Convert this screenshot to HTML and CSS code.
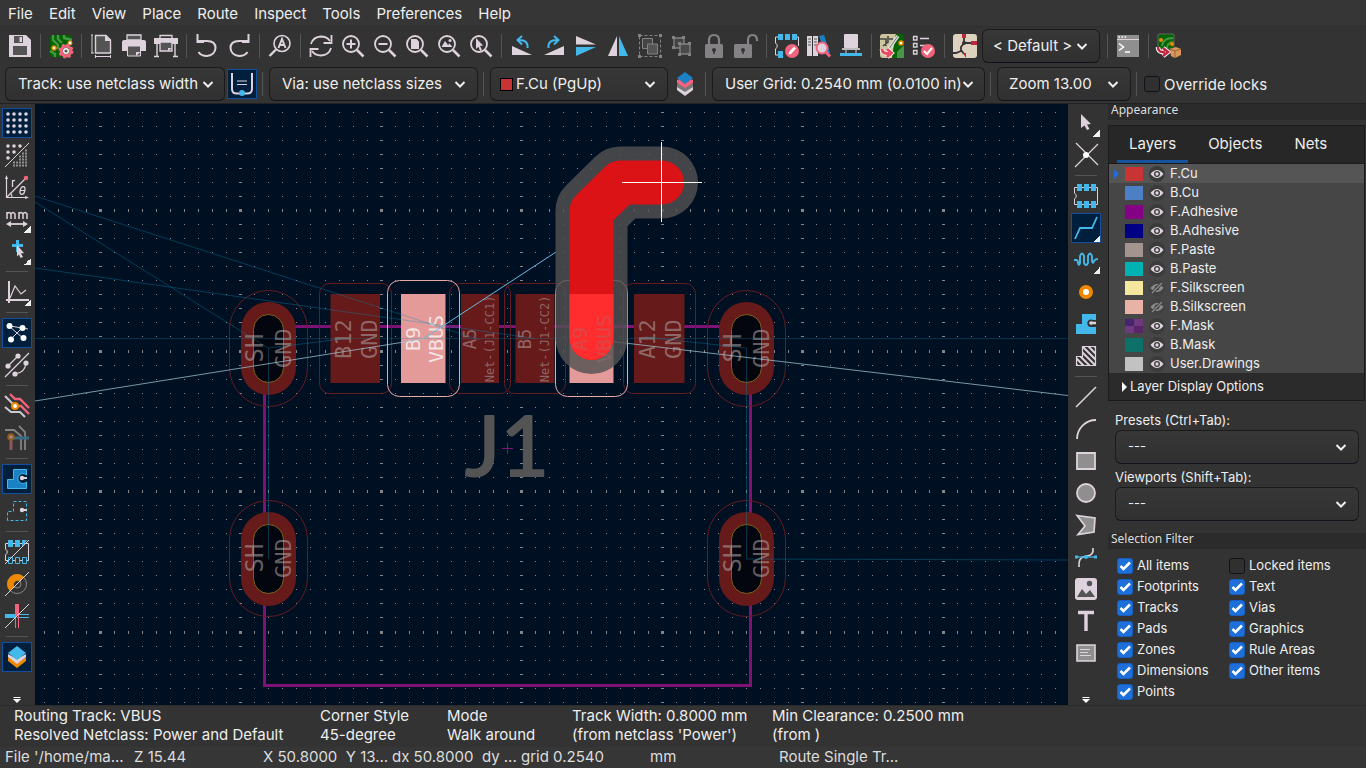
FILE: index.html
```html
<!DOCTYPE html>
<html lang="en">
<head>
<meta charset="utf-8">
<title>PCB Editor</title>
<link rel="stylesheet" href="styles.css">
</head>
<body>
<svg class="defs" aria-hidden="true">
  <symbol id="eye" viewBox="0 0 16 16"><circle cx="8" cy="8" r="8" fill="#3b3b3b"/><path d="M1.500 8Q8 0 14.500 8Q8 16 1.500 8Z" fill="#ded3dd"/><circle cx="8" cy="8" r="3" fill="#3b3b3b"/><circle cx="8" cy="8" r="1.700" fill="#ded3dd"/></symbol>
  <symbol id="eye-off" viewBox="0 0 16 16"><circle cx="8" cy="8" r="8" fill="#424242"/><path d="M1.500 8Q8 0 14.500 8Q8 16 1.500 8Z" fill="#8d8a8d"/><circle cx="8" cy="8" r="2.400" fill="#424242"/><path d="M3 13L13 3" stroke="#424242" stroke-width="3"/><path d="M3 13L13 3" stroke="#8d8a8d" stroke-width="1.300"/></symbol>
  <symbol id="chevron" viewBox="0 0 12 12"><path d="M1.500 4L6 8.500L10.500 4" fill="none" stroke="#eee" stroke-width="2"/></symbol>
  <symbol id="lens" viewBox="0 0 24 24"><circle cx="10" cy="10" r="8" fill="none" stroke="#ded3dd" stroke-width="1.800"/><path d="M16 16L22.500 22.500" stroke="#ded3dd" stroke-width="2.500"/></symbol>
  <symbol id="more" viewBox="0 0 24 24"><path d="M8.500 8.500H15.500M8.500 10.500H15.500" stroke="#fff"/><path d="M8.500 10.500H15.500L12 14Z" fill="#fff"/></symbol>
</svg>

<nav class="menubar">
  <button>File</button><button>Edit</button><button>View</button><button>Place</button><button>Route</button><button>Inspect</button><button>Tools</button><button>Preferences</button><button>Help</button>
</nav>

<div class="toolbar" role="toolbar" aria-label="Main">
  <button class="tool" aria-label="Save"><svg viewBox="0 0 24 24"><path d="M1 1H18L23 6V23H1Z" fill="#ded3dd"/><path d="M6 2H15V9H6Z M5 12H19V21H5Z" fill="#545454"/><path d="M11.500 3H14V8H11.500Z" fill="#ded3dd"/></svg></button>
  <span class="sep"></span>
  <button class="tool" aria-label="Board setup"><svg viewBox="0 0 24 24"><rect x="1" y="1" width="22" height="22" rx="3" fill="#006400"/><path d="M4 1V6L9 11V15M9 1V5L13 9M15 1V4L23 6M1 17L6 20V23" fill="none" stroke="#489648" stroke-width="2.400"/><circle cx="5" cy="14" r="2" fill="#fff" stroke="#ee8800" stroke-width="1.500"/><circle cx="21" cy="9" r="2" fill="#fff" stroke="#ee8800"/><circle cx="17" cy="17" r="4.800" fill="none" stroke="#f2647e" stroke-width="3.200"/><circle cx="17" cy="17" r="6.500" fill="none" stroke="#f2647e" stroke-width="2" stroke-dasharray="2.600 2.500"/><circle cx="17" cy="17" r="3" fill="#fff"/><circle cx="17" cy="17" r="1.600" fill="#555"/></svg></button>
  <span class="sep"></span>
  <button class="tool" aria-label="Page settings"><svg viewBox="0 0 24 24"><path d="M5.500 1.500H16L20.500 6V19H5.500Z" fill="#545454" stroke="#ded3dd" stroke-width="1.400"/><path d="M15 1L21 7H15Z" fill="#ded3dd"/><path d="M2 1V19M1 1H3M1 19H4M5 22.500H21M5.500 21V24M20.500 21V24" stroke="#ded3dd"/></svg></button>
  <button class="tool" aria-label="Print"><svg viewBox="0 0 24 24"><path d="M5 1H19V6H5Z" fill="#545454" stroke="#ded3dd" stroke-width="1.300"/><path d="M0 8Q0 6 2 6H22Q24 6 24 8V17H0Z" fill="#ded3dd"/><path d="M5.500 12H18.500V22H5.500Z" fill="#545454" stroke="#ded3dd"/><path d="M14 18H18.500L14 22Z" fill="#ded3dd"/></svg></button>
  <button class="tool" aria-label="Plot"><svg viewBox="0 0 24 24"><path d="M6 5V1.500H18V5" fill="none" stroke="#ded3dd" stroke-width="1.300"/><path d="M0 4H24V10H0Z" fill="#ded3dd"/><path d="M6 8H18V17H6Z" fill="#545454" stroke="#ded3dd" stroke-width="1.300"/><path d="M14 14H18L14 17Z" fill="#ded3dd"/><path d="M3 10V23M21 10V23M0 22.500H5M19 22.500H24" stroke="#ded3dd" stroke-width="1.400"/></svg></button>
  <span class="sep"></span>
  <button class="tool" aria-label="Undo"><svg viewBox="0 0 24 24"><path d="M3 7H12Q20.500 7 20.500 14Q20 21 12 22Q6 22 3.500 18M2.500 0V8H9" fill="none" stroke="#ded3dd" stroke-width="2"/></svg></button>
  <button class="tool" aria-label="Redo"><svg viewBox="0 0 24 24"><path d="M21 7H12Q3.500 7 3.500 14Q4 21 12 22Q18 22 20.500 18M21.500 0V8H15" fill="none" stroke="#ded3dd" stroke-width="2"/></svg></button>
  <span class="sep"></span>
  <button class="tool" aria-label="Find"><svg viewBox="0 0 24 24"><circle cx="14" cy="9.500" r="8" fill="none" stroke="#ded3dd" stroke-width="1.600"/><path d="M8 15.500L1.500 22" stroke="#ded3dd" stroke-width="2.400"/><path d="M10.500 14L14 5L17.500 14M12 11H16" fill="none" stroke="#ded3dd" stroke-width="2"/></svg></button>
  <span class="sep"></span>
  <button class="tool" aria-label="Refresh"><svg viewBox="0 0 24 24"><path d="M2 10Q4 3 12 2.500Q18 2.500 21 7M22 14Q20 21 12 21.500Q6 21.500 3 17" fill="none" stroke="#ded3dd" stroke-width="1.800"/><path d="M22.500 1V9H14.500M1.500 23V15H9.500" fill="none" stroke="#ded3dd" stroke-width="1.800"/></svg></button>
  <button class="tool" aria-label="Zoom in"><svg viewBox="0 0 24 24"><use href="#lens"/><path d="M10 5.500V14.500M5.500 10H14.500" stroke="#ded3dd" stroke-width="2"/></svg></button>
  <button class="tool" aria-label="Zoom out"><svg viewBox="0 0 24 24"><use href="#lens"/><path d="M5.500 10H14.500" stroke="#ded3dd" stroke-width="2"/></svg></button>
  <button class="tool" aria-label="Zoom to page"><svg viewBox="0 0 24 24"><use href="#lens"/><path d="M6 5H11.500L14 7.500V15H6Z" fill="#ded3dd"/></svg></button>
  <button class="tool" aria-label="Zoom to objects"><svg viewBox="0 0 24 24"><use href="#lens"/><path d="M4.500 13L8 7L11 11L12.500 9.500L15.500 13Z" fill="#ded3dd"/><circle cx="13" cy="6.500" r="1.500" fill="#ded3dd"/></svg></button>
  <button class="tool" aria-label="Zoom to selection"><svg viewBox="0 0 24 24"><use href="#lens"/><path d="M7 4L14 11.500L11 12L13 16L11 17L9.500 12.800L7 15Z" fill="#ded3dd"/></svg></button>
  <span class="sep"></span>
  <button class="tool" aria-label="Rotate counterclockwise"><svg viewBox="0 0 24 24"><path d="M2 12V21H22Z" fill="#ded3dd"/><path d="M17.500 14Q18.500 6 9 6M12 2L7.500 6L12 10.500" fill="none" stroke="#42b8eb" stroke-width="2"/></svg></button>
  <button class="tool" aria-label="Rotate clockwise"><svg viewBox="0 0 24 24"><path d="M22 12V21H2Z" fill="#ded3dd"/><path d="M6.500 14Q5.500 6 15 6M12 2L16.500 6L12 10.500" fill="none" stroke="#42b8eb" stroke-width="2"/></svg></button>
  <button class="tool" aria-label="Flip vertically"><svg viewBox="0 0 24 24"><path d="M2 2L22 10.500H2Z" fill="#ded3dd"/><path d="M2 13L22 13L2 22Z" fill="#42b8eb"/></svg></button>
  <button class="tool" aria-label="Flip horizontally"><svg viewBox="0 0 24 24"><path d="M11 2V22H2Z" fill="#ded3dd"/><path d="M13 2V22H22Z" fill="#42b8eb"/></svg></button>
  <button class="tool" aria-label="Group" disabled><svg viewBox="0 0 24 24"><path d="M1.500 1.500H22.500V22.500H1.500Z" fill="none" stroke="#858285" stroke-dasharray="3 2"/><path d="M4.500 4.500H14.500V14.500H4.500Z" fill="#444" stroke="#858285"/><path d="M9.500 10H19.500V20H9.500Z" fill="#555" stroke="#858285"/><path d="M0 0H3V3H0ZM21 0H24V3H21ZM0 21H3V24H0ZM21 21H24V24H21Z" fill="#858285"/></svg></button>
  <button class="tool" aria-label="Ungroup" disabled><svg viewBox="0 0 24 24"><path d="M4 4H14V14H4Z" fill="#444" stroke="#858285" stroke-width="1.300"/><path d="M10 10H20V20H10Z" fill="#4a4a4a" stroke="#858285" stroke-width="1.300"/><path d="M2 2H5V5H2ZM12 2H15V5H12ZM2 12H5V15H2ZM8 8H11V11H8ZM18 8H21V11H18ZM8 19H11V22H8ZM18 19H21V22H18Z" fill="#858285"/></svg></button>
  <button class="tool" aria-label="Lock" disabled><svg viewBox="0 0 24 24"><path d="M7 11V6Q7 1 12 1Q17 1 17 6V11" fill="none" stroke="#858285" stroke-width="2.200"/><rect x="3" y="10" width="18" height="14" rx="1.500" fill="#858285"/><path d="M12 15V20" stroke="#333" stroke-width="1.500"/><circle cx="12" cy="16" r="2" fill="#333"/></svg></button>
  <button class="tool" aria-label="Unlock" disabled><svg viewBox="0 0 24 24"><path d="M14 11V6Q14 1 18.500 1Q23 1 23 6V7" fill="none" stroke="#858285" stroke-width="2.200"/><rect x="0" y="10" width="18" height="14" rx="1.500" fill="#858285"/><path d="M9 15V20" stroke="#333" stroke-width="1.500"/><circle cx="9" cy="16" r="2" fill="#333"/></svg></button>
  <span class="sep"></span>
  <button class="tool" aria-label="Footprint editor"><svg viewBox="0 0 24 24"><path d="M3 3H.500V9Q4 12 .500 15V21H3M21 3H23.500V12" fill="none" stroke="#ded3dd"/><path d="M3 0H8V6H3ZM10 0H15V6H10ZM17 0H22V6H17ZM3 17H8V24H3Z" fill="#42b8eb"/><circle cx="17" cy="17" r="7" fill="#f2647e"/><path d="M13.500 20.500L14 18L19 12.500L21 14.500L16 20Z" fill="#fff"/></svg></button>
  <button class="tool" aria-label="Footprint library"><svg viewBox="0 0 24 24"><path d="M0 2H5V22H0ZM6 2H11V22H6Z" fill="#ded3dd"/><path d="M12 2L17 1L23 19L19 21Z" fill="#1a81c4"/><path d="M1 5H4M1 8H4M1 11H4M7 5H10M7 8H10M7 11H10" stroke="#545454"/><circle cx="15" cy="14" r="5.500" fill="#ded3dd" stroke="#f2647e" stroke-width="2"/><path d="M19 18L23 22.500" stroke="#f2647e" stroke-width="3"/></svg></button>
  <button class="tool" aria-label="3D viewer"><svg viewBox="0 0 24 24"><rect x="5" y="0" width="14" height="14" rx="1" fill="#ded3dd"/><path d="M3 14H21V16H3Z" fill="#bbb"/><path d="M7 16V20M17 16V20" stroke="#ded3dd"/><path d="M1 19H23V22H1Z" fill="#42b8eb"/></svg></button>
  <span class="sep"></span>
  <button class="tool" aria-label="Update from schematic"><svg viewBox="0 0 24 24"><path d="M3 0H16L12 24H3Q0 24 0 21V3Q0 0 3 0Z" fill="#ccc59d"/><path d="M16 0H21Q24 0 24 3V21Q24 24 21 24H12Z" fill="#006400"/><path d="M23 12L17 18V24H24V12Z" fill="#489648"/><path d="M0 5H6V12M8 2V8L3 12M9 5H13" fill="none" stroke="#444" stroke-width="1.600"/><circle cx="21" cy="9" r="2" fill="#fff" stroke="#ee8800" stroke-width="1.500"/><path d="M18 2L8 16" stroke="#ddd" stroke-width="3.500"/><path d="M18 2L8 16" stroke="#777"/><path d="M2 15Q2 20 9 19.500M7 15L11.500 19L7 23" fill="none" stroke="#fff" stroke-width="4.500"/><path d="M2 15Q2 20 9 19.500M7 15L11.500 19L7 23" fill="none" stroke="#e64b63" stroke-width="3"/></svg></button>
  <button class="tool" aria-label="Design rules checker"><svg viewBox="0 0 24 24"><path d="M1.500 2.500H5V6H1.500ZM1.500 9.500H5V13H1.500ZM1.500 16.500H5V20H1.500ZM8 4.500H17M8 11.500H14" fill="none" stroke="#ded3dd" stroke-width="1.300"/><circle cx="16" cy="17" r="7" fill="#f2647e"/><path d="M12 17L15 20L20 14" fill="none" stroke="#fff" stroke-width="2"/></svg></button>
  <span class="sep"></span>
  <button class="tool" aria-label="Net inspector"><svg viewBox="0 0 24 24"><rect width="24" height="24" rx="3" fill="#ddd2bd"/><path d="M11 3V9L8 13V17L3 19H0M11 9H20M8 16L11 20" fill="none" stroke="#333" stroke-width="1.800"/><path d="M9 0H13V4H9ZM18 7H24V11H18ZM10 19H13V24Z" fill="#bf2641"/><circle cx="11" cy="9" r="2" fill="#333"/></svg></button>
  <label class="combo combo-default"><span class="sr">Variant</span><select><option>&lt; Default &gt;</option></select><svg class="chev"><use href="#chevron"/></svg></label>
  <span class="sep"></span>
  <button class="tool" aria-label="Scripting console"><svg viewBox="0 0 24 24"><rect x="1" y="1" width="22" height="22" fill="#8f8f8f"/><path d="M1 5.500H23" stroke="#ded3dd"/><path d="M2.500 3H4M5.500 3H7M8.500 3H10" stroke="#fff" stroke-width="1.500"/><path d="M3 9.500L7.500 13L3 16.500M9 18H14" fill="none" stroke="#fff" stroke-width="1.500"/></svg></button>
  <span class="sep"></span>
  <button class="tool" aria-label="Archive plugin"><svg viewBox="0 0 24 24"><rect x="1" y="0" width="16" height="15" rx="1" fill="#006400" stroke="#666"/><path d="M5 12Q6 4 16 4M10 14Q10 9 16 8" fill="none" stroke="#489648" stroke-width="2"/><circle cx="4" cy="6" r="2" fill="#ee8800"/><circle cx="15" cy="10" r="2" fill="#ee8800"/><path d="M1 13Q1 19 8 18M6 14L11 18L6 22" fill="none" stroke="#fff" stroke-width="4.500"/><path d="M1 13Q1 19 8 18M6 14L11 18L6 22" fill="none" stroke="#bf2641" stroke-width="2.600"/><path d="M13 15L19 13L24 15V21L18 24L14 22Z" fill="#d9975b"/><path d="M13 15L18 17L24 15M18 17V24" fill="none" stroke="#9c6430"/></svg></button>
</div>

<div class="toolbar toolbar-options" role="toolbar" aria-label="Options">
  <label class="combo combo-track"><span class="sr">Track width</span><select><option>Track: use netclass width</option></select><svg class="chev"><use href="#chevron"/></svg></label>
  <button class="tool on" aria-label="Auto track width"><svg viewBox="0 0 24 24"><path d="M2 1V17Q2 21.500 7 21.500H17Q22 21.500 22 17V1" fill="none" stroke="#ded3dd" stroke-width="2"/><path d="M7 9H17M7 12.500H17" stroke="#ded3dd" stroke-width="1.200"/><circle cx="12" cy="21" r="3" fill="#42b8eb"/></svg></button>
  <span class="sep"></span>
  <label class="combo combo-via"><span class="sr">Via size</span><select><option>Via: use netclass sizes</option></select><svg class="chev"><use href="#chevron"/></svg></label>
  <span class="sep"></span>
  <label class="combo combo-layer"><span class="sr">Active layer</span><select><option>F.Cu (PgUp)</option></select><span class="swatch-box"></span><svg class="chev"><use href="#chevron"/></svg></label>
  <button class="tool" aria-label="Layer pair"><svg viewBox="0 0 24 24"><path d="M4 15L12 10L20 15V18L12 24L4 18Z" fill="#ded3dd"/><path d="M4 12L12 7L20 12V15L12 20L4 15Z" fill="#777"/><path d="M4 8L12 5L20 8V11L12 16L4 11Z" fill="#f2647e"/><path d="M12 0L20 6L12 12L4 6Z" fill="#1a81c4"/></svg></button>
  <span class="sep"></span>
  <label class="combo combo-grid"><span class="sr">Grid</span><select><option>User Grid: 0.2540 mm (0.0100 in)</option></select><svg class="chev"><use href="#chevron"/></svg></label>
  <span class="sep"></span>
  <label class="combo combo-zoom"><span class="sr">Zoom</span><select><option>Zoom 13.00</option></select><svg class="chev"><use href="#chevron"/></svg></label>
  <span class="sep"></span>
  <label class="check override"><input type="checkbox">Override locks</label>
</div>

<main class="work">
  <div class="rail" role="toolbar" aria-label="Display options">
    <button class="tool on" aria-label="Show grid"><svg viewBox="0 0 24 24"><path d="M3 3H22M3 9H22M3 15H22M3 21H22" stroke="#ded3dd" stroke-width="3.600" stroke-linecap="round" stroke-dasharray="0 6"/></svg></button>
    <button class="tool" aria-label="Grid overrides"><svg viewBox="0 0 24 24"><path d="M3 3H16M3 9H10M3 15H4" stroke="#ded3dd" stroke-width="3.600" stroke-linecap="round" stroke-dasharray="0 6"/><path d="M20 7.500H23M17 10.500H23M14 13.500H23M14 16.500H23M8 19.500H23M8 22.500H23" stroke="#8f8f8f" stroke-width="2" stroke-dasharray="2 1"/><path d="M0 24L24 0" stroke="#ded3dd"/></svg></button>
    <button class="tool" aria-label="Polar coordinates"><svg viewBox="0 0 24 24"><path d="M1.500 2V22.500H22M1.500 22.500L21 3M7 22Q7 19 5 18" fill="none" stroke="#ded3dd" stroke-width="1.200"/><path d="M0 4L1.500 0L3 4ZM20 21L24 22.500L20 24Z" fill="#ded3dd"/><circle cx="21" cy="3" r="2.200" fill="#f2647e"/><path d="M7.500 5V12M7.500 7Q8 5 10 5.500" fill="none" stroke="#ded3dd" stroke-width="1.300"/><ellipse cx="17.500" cy="15.500" rx="2.300" ry="4" transform="rotate(15 17.500 15.500)" fill="none" stroke="#ded3dd" stroke-width="1.300"/><path d="M15 15.500H20" stroke="#ded3dd"/></svg></button>
    <button class="tool sub" aria-label="Units"><svg viewBox="0 0 24 24"><path d="M2 12V5M2 7Q4 4 6 7V12M6 7Q8 4 10 7V12M14 12V5M14 7Q16 4 18 7V12M18 7Q20 4 22 7V12" fill="none" stroke="#ded3dd" stroke-width="1.500"/><path d="M5 17H19" stroke="#ded3dd" stroke-width="1.800"/><path d="M1 17L6 14V20ZM23 17L18 14V20Z" fill="#ded3dd"/></svg></button>
    <button class="tool sub" aria-label="Crosshair"><svg viewBox="0 0 24 24"><path d="M12.500 1V13M7 6.500H18" stroke="#42b8eb" stroke-width="3"/><path d="M12 6L19 14L16 14.500L18 18L15.500 19L14 15.500L12 17.500Z" fill="#ded3dd"/></svg></button>
    <span class="sep"></span>
    <button class="tool sub" aria-label="Line modes"><svg viewBox="0 0 24 24"><path d="M4 1V23M1 20H24" stroke="#ded3dd" stroke-width="2"/><path d="M5 18L10 6L16 14L21 10" fill="none" stroke="#ded3dd" stroke-width="1.200"/></svg></button>
    <span class="sep"></span>
    <button class="tool on" aria-label="Ratsnest"><svg viewBox="0 0 24 24"><path d="M5 5L23 8M4 5L19 18M17 7L6 18" stroke="#ded3dd"/><circle cx="4.500" cy="5" r="3" fill="#fff"/><circle cx="17.500" cy="7" r="3" fill="#fff"/><circle cx="6" cy="18.500" r="3" fill="#fff"/><circle cx="18.500" cy="17" r="3" fill="#fff"/></svg></button>
    <button class="tool" aria-label="Curved ratsnest"><svg viewBox="0 0 24 24"><path d="M0 24L24 0M3 13L13 3M10 21Q20 20 21 10" fill="none" stroke="#ded3dd" stroke-width="1.200"/><g fill="#ded3dd"><circle cx="3" cy="13" r="2.600"/><circle cx="13" cy="3" r="2.600"/><circle cx="10" cy="21" r="2.600"/><circle cx="21" cy="10" r="2.600"/></g></svg></button>
    <span class="sep"></span>
    <button class="tool" aria-label="Inactive layer mode"><svg viewBox="0 0 24 24"><path d="M5 0L10 5H15L24 14M10 12H16L24 20" fill="none" stroke="#f2647e" stroke-width="2.400"/><path d="M0 2L10 12M0 13L6 18H15L20 23" fill="none" stroke="#ccc" stroke-width="2"/><circle cx="10" cy="12" r="3" fill="#fff" stroke="#ee8800" stroke-width="2"/></svg></button>
    <button class="tool" aria-label="Net color mode"><svg viewBox="0 0 24 24"><path d="M0 4H9L16 10V24M14 0L20 6V24" fill="none" stroke="#858285" stroke-width="1.800"/><path d="M6 12H24" stroke="#376a83" stroke-width="3"/><path d="M6 12V24" stroke="#8b5a5a" stroke-width="3"/><circle cx="6" cy="11" r="2.800" fill="#a88" stroke="#8e5a1f" stroke-width="2"/></svg></button>
    <span class="sep"></span>
    <button class="tool on" aria-label="Filled zones"><svg viewBox="0 0 24 24"><path d="M2.500 21.500V12.500H8.500V2.500H21.500V8A5 5 0 1 0 21.500 15V21.500Z" fill="#1a81c4" stroke="#42b8eb"/><path d="M17 11H22" stroke="#ded3dd" stroke-width="2"/><circle cx="17" cy="11" r="2.200" fill="#ded3dd"/></svg></button>
    <button class="tool" aria-label="Zone outlines"><svg viewBox="0 0 24 24"><path d="M2.500 21.500V12.500H8.500V2.500H21.500V21.500Z" fill="none" stroke="#42b8eb" stroke-dasharray="3 2"/><path d="M17 11H22" stroke="#ded3dd" stroke-width="2"/><circle cx="17" cy="11" r="2.200" fill="#ded3dd"/></svg></button>
    <span class="sep"></span>
    <button class="tool" aria-label="Pad outlines"><svg viewBox="0 0 24 24"><path d="M3 3.500H.500V9Q4 12 .500 15V20.500H23.500V3.500H3" fill="none" stroke="#ded3dd"/><path d="M3 0H8V7H3ZM10 0H15V7H10ZM17 0H22L17 7Z" fill="#42b8eb"/><path d="M3.500 17.500H7.500V23.500H3.500ZM10.500 17.500H14.500V23.500H10.500ZM17.500 17.500H21.500V23.500H17.500Z" fill="#333" stroke="#42b8eb"/><path d="M0 24L24 0" stroke="#ded3dd"/></svg></button>
    <button class="tool" aria-label="Via outlines"><svg viewBox="0 0 24 24"><circle cx="12" cy="12" r="9.500" fill="none" stroke="#858285"/><circle cx="12" cy="12" r="4" fill="none" stroke="#858285"/><path d="M5 19A9.500 9.500 0 0 1 19 5L15 9A4.500 4.500 0 0 0 9 15Z" fill="#ee8800"/><path d="M0 24L24 0" stroke="#ded3dd"/></svg></button>
    <button class="tool" aria-label="Track outlines"><svg viewBox="0 0 24 24"><path d="M0 12H11" stroke="#42b8eb" stroke-width="4"/><path d="M12 0V12" stroke="#f2647e" stroke-width="4"/><path d="M12 10.500H24M12 13.500H24" stroke="#42b8eb"/><path d="M10.500 13V24M13.500 12V24" stroke="#f2647e"/><path d="M0 24L24 0" stroke="#ded3dd"/></svg></button>
    <span class="sep"></span>
    <button class="tool on" aria-label="Layers manager"><svg viewBox="0 0 24 24"><path d="M3 12L12 18L21 12V16L12 23L3 16Z" fill="#ee8800"/><path d="M3 9L12 14L21 9V12L12 19L3 12Z" fill="#ded3dd"/><path d="M12 1L21 8L12 15L3 8Z" fill="#42b8eb"/></svg></button>
    <button class="tool more" aria-label="More tools"><svg viewBox="0 0 24 24"><use href="#more"/></svg></button>
  </div>

  <svg class="board" role="img" aria-label="Board canvas">
    <defs><clipPath id="padA9"><path d="M569 294H614V383H569Z"/></clipPath></defs>
    <g transform="translate(-35 -104)">
      <path id="grid" fill="#858585"/>
      <g fill="none" stroke="#7f1275" stroke-width="3"><path d="M264.500 380V685.500H750.500V380M290 326.500H725"/></g>
      <g fill="#661a1a">
        <path d="M330.500 294H380V383H330.500ZM461 294H499V383H461ZM515.500 294H554.500V383H515.500ZM634 294H684.500V383H634Z"/>
        <rect x="241" y="302" width="55" height="93" rx="27.500"/><rect x="719" y="302" width="55" height="93" rx="27.500"/>
        <rect x="241" y="512" width="55" height="94" rx="27.500"/><rect x="719" y="512" width="55" height="94" rx="27.500"/>
      </g>
      <path d="M401 294H445.500V383H401ZM569.500 294H613.500V383H569.500Z" fill="#e39a98"/>
      <g fill="#03060f" stroke="#7d6216">
        <rect x="253.500" y="314.500" width="30" height="68" rx="15"/><rect x="731.500" y="314.500" width="30" height="68" rx="15"/>
        <rect x="253.500" y="524.500" width="30" height="69" rx="15"/><rect x="731.500" y="524.500" width="30" height="69" rx="15"/>
      </g>
      <g fill="none" stroke="#661b1f">
        <rect x="229.500" y="290.500" width="78" height="116" rx="39"/><rect x="707.500" y="290.500" width="78" height="116" rx="39"/>
        <rect x="229.500" y="500.500" width="78" height="116" rx="39"/><rect x="707.500" y="500.500" width="78" height="116" rx="39"/>
        <rect x="319.500" y="283.500" width="72" height="110" rx="10"/><rect x="449.500" y="283.500" width="61" height="110" rx="10"/>
        <rect x="504.500" y="283.500" width="61" height="110" rx="10"/><rect x="623.500" y="283.500" width="72" height="110" rx="10"/>
      </g>
      <g fill="none" stroke="#e8a9a7"><rect x="387.500" y="280.500" width="72" height="116" rx="12"/><rect x="555.500" y="280.500" width="72" height="116" rx="12"/></g>
      <g class="pad-text">
        <g class="t24"><text transform="translate(263 348) rotate(-90)">SH</text><text transform="translate(741 348) rotate(-90)">SH</text><text transform="translate(263 558) rotate(-90)">SH</text><text transform="translate(741 558) rotate(-90)">SH</text></g>
        <g class="t22"><text transform="translate(291 348) rotate(-90)">GND</text><text transform="translate(769 348) rotate(-90)">GND</text><text transform="translate(291 558) rotate(-90)">GND</text><text transform="translate(769 558) rotate(-90)">GND</text>
          <text transform="translate(351 339) rotate(-90)">B12</text><text transform="translate(377 339) rotate(-90)">GND</text><text transform="translate(655 339) rotate(-90)">A12</text><text transform="translate(681 339) rotate(-90)">GND</text></g>
        <g class="t20 lit"><text transform="translate(420 339) rotate(-90)">B9</text><text transform="translate(443 339) rotate(-90)">VBUS</text></g>
        <g class="t17"><text transform="translate(476 339) rotate(-90)">A5</text><text transform="translate(531 339) rotate(-90)">B5</text></g>
        <g class="t12"><text transform="translate(494 339) rotate(-90)">Net-(J1-CC1)</text><text transform="translate(549 339) rotate(-90)">Net-(J1-CC2)</text></g>
      </g>
      <g class="refdes"><text x="507" y="476">J1</text></g>
      <g fill="none" stroke="#0a8fb4" stroke-opacity=".35">
        <path d="M35 196L480 340M35 202L268 348L342 339M35 268L535 338.500M268.500 348V559M746.500 348V559L1068 560M645 337L746 348"/>
        <path d="M35 338.500H1068" stroke-opacity=".25"/>
      </g>
      <path d="M35 401L423 339M591 339L1068 395.500" fill="none" stroke="#9fc6d4" stroke-opacity=".75"/>
      <path d="M423 339L556 252" stroke="#6db8e0"/>
      <path d="M502 448.500H513M507.500 443V454" stroke="#7f1275"/>
      <path d="M591.500 338V211L620.500 182.500H662" fill="none" stroke="#525252" stroke-opacity=".82" stroke-width="72" stroke-linecap="round" stroke-linejoin="round"/>
      <path d="M591.500 338V211L620.500 182.500H662" fill="none" stroke="#db1216" stroke-width="44" stroke-linecap="round" stroke-linejoin="round"/>
      <path d="M591.500 338V211" clip-path="url(#padA9)" fill="none" stroke="#ff2d2d" stroke-width="44" stroke-linecap="round"/>
      <g class="pad-text t20 faded"><text transform="translate(587 339) rotate(-90)">A9</text><text transform="translate(611 339) rotate(-90)">VBUS</text></g>
      <path d="M622 182.500H702M661.500 142V222" stroke="#fff"/>
    </g>
  </svg>

  <div class="rail rail-right" role="toolbar" aria-label="Drawing tools">
    <button class="tool sub" aria-label="Select"><svg viewBox="0 0 24 24"><path d="M7 3L17 13L13 13.500L15.500 18L13 19L10.500 14.500L7 17Z" fill="#ded3dd"/></svg></button>
    <button class="tool" aria-label="Local ratsnest"><svg viewBox="0 0 24 24"><path d="M2 0L24 22M1 24L24 1" stroke="#ded3dd" stroke-width="1.200"/><circle cx="12" cy="12" r="3" fill="#fff"/></svg></button>
    <span class="sep"></span>
    <button class="tool" aria-label="Place footprint"><svg viewBox="0 0 24 24"><path d="M3 3.500H.500V9Q4 12 .500 15V20.500H23.500V3.500Z" fill="none" stroke="#ded3dd"/><path d="M3 0H8V7H3ZM10 0H15V7H10ZM17 0H22V7H17ZM3 17H8V24H3ZM10 17H15V24H10ZM17 17H22V24H17Z" fill="#42b8eb"/></svg></button>
    <button class="tool on sub" aria-label="Route track"><svg viewBox="0 0 24 24"><path d="M1 23L6 12H18L23 1" fill="none" stroke="#42b8eb" stroke-width="1.800"/></svg></button>
    <button class="tool sub" aria-label="Tune length"><svg viewBox="0 0 24 24"><path d="M0 12H2Q4 12 4 15Q5 19 6 15V8Q8 3 10 8V15Q12 19 14 15V8Q16 3 18 8V13Q19 17 20 13Q21 11 24 11" fill="none" stroke="#42b8eb" stroke-width="1.900"/></svg></button>
    <button class="tool" aria-label="Add via"><svg viewBox="0 0 24 24"><circle cx="12" cy="12" r="5" fill="#fff" stroke="#ee8800" stroke-width="4"/></svg></button>
    <button class="tool" aria-label="Add zone"><svg viewBox="0 0 24 24"><path d="M2 22V12H8V2H22V8H17A3.500 3.500 0 1 0 17 15H22V22Z" fill="#42b8eb"/><circle cx="17" cy="11" r="3.500" fill="#333"/><path d="M17 11H22" stroke="#ded3dd" stroke-width="2.500"/><circle cx="17" cy="11" r="1.800" fill="#ded3dd"/></svg></button>
    <button class="tool" aria-label="Add rule area"><svg viewBox="0 0 24 24"><clipPath id="ra"><path d="M2 22V12H8V2H22V22Z"/></clipPath><path d="M-2 10L14 26M2 8L20 26M4 4L24 24M8 2L24 18M12 0L24 12M17 -1L24 6M-2 16L6 24" clip-path="url(#ra)" stroke="#ded3dd" stroke-width="2"/><path d="M2.500 21.500V12.500H8.500V2.500H21.500V21.500Z" fill="none" stroke="#ded3dd" stroke-width="1.200"/></svg></button>
    <span class="sep"></span>
    <button class="tool" aria-label="Draw line"><svg viewBox="0 0 24 24"><path d="M2 22L22 2" stroke="#ded3dd" stroke-width="1.600"/></svg></button>
    <button class="tool" aria-label="Draw arc"><svg viewBox="0 0 24 24"><path d="M3 22A19 19 0 0 1 22 3" fill="none" stroke="#ded3dd" stroke-width="1.800"/></svg></button>
    <button class="tool" aria-label="Draw rectangle"><svg viewBox="0 0 24 24"><path d="M3 4H21V20H3Z" fill="#8f8f8f" stroke="#ded3dd" stroke-width="1.800"/></svg></button>
    <button class="tool" aria-label="Draw circle"><svg viewBox="0 0 24 24"><circle cx="12" cy="12" r="9" fill="#8f8f8f" stroke="#ded3dd" stroke-width="1.800"/></svg></button>
    <button class="tool" aria-label="Draw polygon"><svg viewBox="0 0 24 24"><path d="M3 2.500L21 5L20 19L4 21.500L11 13Z" fill="#8f8f8f" stroke="#ded3dd" stroke-width="1.700"/></svg></button>
    <button class="tool" aria-label="Draw bezier"><svg viewBox="0 0 24 24"><path d="M5 22Q4 12 12 11Q20 11 19 3" fill="none" stroke="#ded3dd" stroke-width="1.700"/><path d="M2 12H22" stroke="#42b8eb" stroke-width="1.300"/><path d="M1 10.500H4V13.500H1ZM20 10.500H23V13.500H20Z" fill="#42b8eb"/><circle cx="12" cy="12" r="2" fill="#42b8eb"/></svg></button>
    <button class="tool" aria-label="Add image"><svg viewBox="0 0 24 24"><rect x="1" y="1" width="22" height="22" rx="3" fill="#ded3dd"/><path d="M3 20L8 12L12 17L16 13L21 20Z" fill="#545454"/><circle cx="15.500" cy="6.500" r="2.700" fill="#545454"/></svg></button>
    <button class="tool" aria-label="Add text"><svg viewBox="0 0 24 24"><path d="M4 3.500H20M12 3V22" stroke="#ded3dd" stroke-width="3.400"/></svg></button>
    <button class="tool" aria-label="Add text box"><svg viewBox="0 0 24 24"><path d="M3 4H21V20H3Z" fill="#8f8f8f" stroke="#ded3dd" stroke-width="1.600"/><path d="M6 8.500H16M6 11.500H14M6 14.500H17" stroke="#ded3dd"/></svg></button>
    <button class="tool more" aria-label="More drawing tools"><svg viewBox="0 0 24 24"><use href="#more"/></svg></button>
  </div>

  <aside class="panel">
    <h2 class="caption">Appearance</h2>
    <section class="notebook">
      <div class="tabs" role="tablist"><button role="tab" aria-selected="true">Layers</button><button role="tab">Objects</button><button role="tab">Nets</button></div>
      <ul class="layers">
        <li class="current"><i class="sw fcu"></i><svg><use href="#eye"/></svg>F.Cu</li>
        <li><i class="sw bcu"></i><svg><use href="#eye"/></svg>B.Cu</li>
        <li><i class="sw fadh"></i><svg><use href="#eye"/></svg>F.Adhesive</li>
        <li><i class="sw badh"></i><svg><use href="#eye"/></svg>B.Adhesive</li>
        <li><i class="sw fpaste"></i><svg><use href="#eye"/></svg>F.Paste</li>
        <li><i class="sw bpaste"></i><svg><use href="#eye"/></svg>B.Paste</li>
        <li><i class="sw fsilk"></i><svg><use href="#eye-off"/></svg>F.Silkscreen</li>
        <li><i class="sw bsilk"></i><svg><use href="#eye-off"/></svg>B.Silkscreen</li>
        <li><i class="sw fmask"></i><svg><use href="#eye"/></svg>F.Mask</li>
        <li><i class="sw bmask"></i><svg><use href="#eye"/></svg>B.Mask</li>
        <li><i class="sw user"></i><svg><use href="#eye"/></svg>User.Drawings</li>
      </ul>
      <button class="expander">Layer Display Options</button>
    </section>
    <div class="fields">
      <label for="presets">Presets (Ctrl+Tab):</label>
      <span class="combo"><select id="presets"><option>---</option></select><svg class="chev"><use href="#chevron"/></svg></span>
      <label for="viewports">Viewports (Shift+Tab):</label>
      <span class="combo"><select id="viewports"><option>---</option></select><svg class="chev"><use href="#chevron"/></svg></span>
    </div>
    <h2 class="caption">Selection Filter</h2>
    <div class="filter">
      <label class="check"><input type="checkbox" checked>All items</label><label class="check"><input type="checkbox">Locked items</label>
      <label class="check"><input type="checkbox" checked>Footprints</label><label class="check"><input type="checkbox" checked>Text</label>
      <label class="check"><input type="checkbox" checked>Tracks</label><label class="check"><input type="checkbox" checked>Vias</label>
      <label class="check"><input type="checkbox" checked>Pads</label><label class="check"><input type="checkbox" checked>Graphics</label>
      <label class="check"><input type="checkbox" checked>Zones</label><label class="check"><input type="checkbox" checked>Rule Areas</label>
      <label class="check"><input type="checkbox" checked>Dimensions</label><label class="check"><input type="checkbox" checked>Other items</label>
      <label class="check"><input type="checkbox" checked>Points</label>
    </div>
  </aside>
</main>

<section class="messages">
  <p>Routing Track: VBUS<br>Resolved Netclass: Power and Default</p>
  <p>Corner Style<br>45-degree</p>
  <p>Mode<br>Walk around</p>
  <p>Track Width: 0.8000 mm<br>(from netclass 'Power')</p>
  <p>Min Clearance: 0.2500 mm<br>(from )</p>
</section>
<footer class="status">
  <span>File '/home/ma...</span><span>Z 15.44</span><span>X 50.8000&nbsp; Y 13...</span><span>dx 50.8000&nbsp; dy ...</span><span>grid 0.2540</span><span>mm</span><span>Route Single Tr...</span>
</footer>
<script src="grid.js"></script>
</body>
</html>
```
FILE: grid.js
```js
// Dot grid: every tenth row and column is drawn heavier.
const STEP = 14.05;
const ORIGIN = { x: 99.7, y: 210 };
let d = "";
for (let j = -8; j < 60; j++) {
  for (let i = -5; i < 110; i++) {
    const x = Math.round(ORIGIN.x + i * STEP);
    const y = Math.round(ORIGIN.y + j * STEP);
    const w = i % 10 === 0 ? 3 : 1;
    const h = j % 10 === 0 ? 3 : 1;
    d += `M${x - (w - 1) / 2} ${y - (h - 1) / 2}h${w}v${h}h${-w}z`;
  }
}
document.getElementById("grid").setAttribute("d", d);
```
FILE: styles.css
```css
* { box-sizing: border-box; }
body {
  margin: 0;
  height: 100vh;
  display: flex;
  flex-direction: column;
  overflow: hidden;
  background: #333;
  color: #eee;
  font: 15px/19px Inter, sans-serif;
}
button, select, input { font: inherit; color: inherit; }
button { background: none; border: 0; padding: 0; }
.defs { position: absolute; width: 0; height: 0; }
.sr { position: absolute; width: 1px; height: 1px; overflow: hidden; clip-path: inset(50%); }

.menubar {
  display: flex;
  gap: 16px;
  height: 27px;
  flex: none;
  padding: 0 8px;
  background: #363636;
  border-bottom: 1px solid #2e2e2e;
}

.toolbar { display: flex; align-items: center; flex: none; height: 38px; padding-left: 4px; }
.tool {
  width: 30px;
  height: 30px;
  margin: 1px;
  flex: none;
  display: grid;
  place-items: center;
  border: 1px solid transparent;
}
.tool > svg { width: 24px; height: 24px; display: block; overflow: visible; }
.tool.on { background-color: #001f3d; border-color: #144f9d; }
.tool.sub {
  background-image: linear-gradient(135deg, transparent 50%, #eee 50%);
  background-size: 7px 7px;
  background-position: right bottom;
  background-repeat: no-repeat;
}
.sep { flex: none; width: 1px; height: 24px; margin: 0 4px; background: #555; }

.combo { display: grid; grid-template-columns: 1fr auto; align-items: center; margin: 0 2px; }
.combo select {
  grid-area: 1 / 1 / 2 / 3;
  appearance: none;
  width: 100%;
  height: 34px;
  padding: 0 4px 1px 12px;
  border: 1px solid #1b1b1b;
  border-bottom-color: #10131a;
  border-radius: 6px;
  background: linear-gradient(#373737, #303030);
}
.chev { grid-area: 1 / 2; width: 12px; height: 12px; margin-right: 12px; pointer-events: none; }
.combo-default { width: 118px; margin: 0 3px 0 1px; }
.combo-default select { padding-left: 10px; }
.toolbar-options { padding-left: 3px; }
.toolbar-options .combo { margin: 0 1px 0 2px; }
.combo-track { width: 220px; }
.combo-track .chev { margin-right: 11px; }
.combo-via { width: 209px; }
.combo-layer { width: 178px; }
.combo-layer select { padding-left: 25px; }
.swatch-box { grid-area: 1 / 1; width: 13px; height: 13px; margin-left: 10px; background: #c83434; border: 1px solid #000; pointer-events: none; }
.combo-grid { width: 273px; }
.combo-grid .chev { margin-right: 11px; }
.combo-zoom { width: 134px; }
.combo-zoom select { padding-left: 11px; }

.check { display: flex; align-items: center; gap: 4px; }
.check input {
  appearance: none;
  width: 16px;
  height: 16px;
  margin: 0;
  border: 1px solid #10131a;
  border-radius: 3px;
  background: #303030;
}
.check input:checked {
  border-color: #155fbf;
  background: #1f6fdb;
  background-image: url("data:image/svg+xml,%3Csvg xmlns='http://www.w3.org/2000/svg' viewBox='0 0 14 14'%3E%3Cpath d='M2.500 7L5.500 10L12 3.500' fill='none' stroke='white' stroke-width='2.500'/%3E%3C/svg%3E");
}
.override { margin-left: 3px; }

.work { flex: 1; min-height: 0; display: flex; border-top: 1px solid #222; }
.rail { flex: none; width: 35px; display: flex; flex-direction: column; padding: 3px 0 0 1px; }
.rail .sep { width: 22px; height: 1px; margin: 4px 5px; }
.rail .more { margin-top: auto; margin-bottom: -11px; }
.rail-right { width: 40px; padding-left: 2px; }
.board { flex: 1; min-width: 0; height: 100%; background: #001023; display: block; }
.pad-text { font-family: "DejaVu Sans Mono", monospace; fill: #b4aaaa; fill-opacity: .55; text-anchor: middle; }
.t24 { font-size: 24px; }
.t22 { font-size: 22px; }
.t20 { font-size: 20px; }
.t17 { font-size: 17px; }
.t12 { font-size: 12px; }
.lit { fill: #f6eeee; fill-opacity: .9; }
.faded { fill: #a07070; fill-opacity: .4; }
.refdes { font: 84px Lato, sans-serif; fill: #545454; stroke: #545454; stroke-width: 2px; stroke-linejoin: round; text-anchor: middle; }

.panel { flex: none; width: 258px; }
.caption { margin: 0; padding-left: 3px; height: 16px; background: #2b2b2b; color: #ddd; font: 12px/12px "Noto Sans", sans-serif; }
.notebook { margin: 5px 1px 0 0; border: 1px solid #1b1b1b; background: #272727; }
.tabs { display: flex; padding-left: 8px; height: 38px; border-bottom: 1px solid #1b1b1b; }
.tabs button { padding: 0 12px 2px; margin-right: 8px; }
.tabs button[aria-selected] { border-bottom: 3px solid #15539e; padding-top: 1px; padding-bottom: 0; }
.layers { list-style: none; margin: 0; padding: 0; background: #464646; font-size: 13px; }
.layers li { display: flex; align-items: center; height: 19px; padding-left: 16px; }
.layers svg { width: 16px; height: 16px; margin: 0 5px 0 6px; }
.layers .current { background: #555; padding-left: 5px; }
.layers .current::before { content: ""; border: 5px solid transparent; border-left-color: #1f6fdb; border-right: 0; margin-right: 6px; }
.sw { width: 18px; height: 14px; }
.fcu { background: #c83434; }
.bcu { background: #4d7fc4; }
.fadh { background: #840084; }
.badh { background: #000084; }
.fpaste { background: #a4948f; }
.bpaste { background: #00b2b2; }
.fsilk { background: #f5e79e; }
.bsilk { background: #e8b2a7; }
.fmask { background: conic-gradient(#6f3a7d 25%, #5a2468 0 50%, #6f3a7d 0 75%, #46246e 0); }
.bmask { background: #0e7169; }
.user { background: #c2c2c2; }
.expander { display: flex; align-items: center; width: 100%; height: 27px; padding-left: 13px; background: #2b2b2b; font-size: 13px; }
.expander::before { content: ""; border: 5px solid transparent; border-left-color: #fff; border-right: 0; margin-right: 3px; }
.fields { display: grid; padding: 9px 7px; font-size: 13px; }
.fields label { line-height: 20px; }
.fields .combo { margin: 0 0 3px; }
.filter { display: grid; grid-template-columns: 112px 1fr; grid-auto-rows: 21px; padding: 6px 0 0 9px; font-size: 13px; }

.messages { flex: none; display: grid; grid-template-columns: 306px 127px 125px 200px 1fr; padding: 0 0 0 14px; height: 42px; border-top: 1px solid #2b2b2b; }
.messages p { margin: 0; white-space: nowrap; }
.status { flex: none; display: grid; grid-template-columns: repeat(7, 129px); height: 21px; padding-left: 5px; background: #363636; color: #ddd; white-space: nowrap; }
```
